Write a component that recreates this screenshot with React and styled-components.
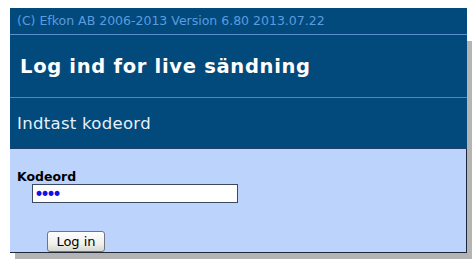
import styled, { createGlobalStyle } from 'styled-components';

const GlobalStyle = createGlobalStyle`
  html, body {
    margin: 0;
    padding: 0;
    background: #ffffff;
    font-family: "DejaVu Sans", Verdana, sans-serif;
  }
`;

const Page = styled.div`
  padding: 8px 0 12px 10px;
  width: 457px;
`;

const CopyrightBar = styled.div`
  height: 26px;
  background: #024a7b;
  border-bottom: 1px solid #5a8fd0;
  color: #5b9ce0;
  font-size: 12.5px;
  line-height: 26px;
  padding-left: 7px;
  white-space: nowrap;
`;

const Panel = styled.div`
  box-shadow: 5px 6px 0 #b4b4b4;
`;

const TitleRow = styled.div`
  height: 62px;
  background: #024a7b;
  border-bottom: 1px solid #4f86c8;
  display: flex;
  align-items: center;
  padding-left: 10px;
  color: #ffffff;
  font-size: 19.5px;
  letter-spacing: 0.7px;
  font-weight: bold;
`;

const SubtitleRow = styled.div`
  height: 50px;
  background: #024a7b;
  border-bottom: 1px solid #1f3f66;
  display: flex;
  align-items: center;
  padding-left: 7px;
  color: #e8f0fa;
  font-size: 16.5px;
  letter-spacing: 0.3px;
`;

const FormArea = styled.form`
  height: 104px;
  background: #bcd3fb;
  border-right: 1px solid #1c2838;
  border-bottom: 1px solid #1c2838;
  padding: 20px 0 0 7px;
  box-sizing: border-box;
  margin: 0;
`;

const Label = styled.div`
  font-size: 12.5px;
  font-weight: bold;
  color: #000000;
  line-height: 15px;
`;

const PasswordInput = styled.input`
  display: block;
  margin: 0 0 0 15px;
  width: 206px;
  height: 19px;
  box-sizing: border-box;
  border: 1px solid #3b4a5c;
  background: #ffffff;
  color: #0a14e8;
  font-family: "DejaVu Sans", Verdana, sans-serif;
  font-size: 17px;
  letter-spacing: -4px;
  padding: 0 1px;
  outline: none;
`;

const LoginButton = styled.button`
  display: block;
  margin: 28px 0 0 30px;
  width: 58px;
  height: 21px;
  border: 1px solid #6f7680;
  border-radius: 3px;
  background: linear-gradient(#ffffff, #f0f0ec 60%, #d8d8d2);
  font-family: "DejaVu Sans", Tahoma, sans-serif;
  font-size: 13px;
  color: #000000;
  padding: 0;
`;

const App = () => (
  <>
    <GlobalStyle />
    <Page>
      <CopyrightBar>(C) Efkon AB 2006-2013 Version 6.80 2013.07.22</CopyrightBar>
      <Panel>
        <TitleRow>Log ind for live sändning</TitleRow>
        <SubtitleRow>Indtast kodeord</SubtitleRow>
        <FormArea onSubmit={(e) => e.preventDefault()}>
          <Label>Kodeord</Label>
          <PasswordInput type="password" defaultValue="1234" />
          <LoginButton type="submit">Log in</LoginButton>
        </FormArea>
      </Panel>
    </Page>
  </>
);

export default App;
